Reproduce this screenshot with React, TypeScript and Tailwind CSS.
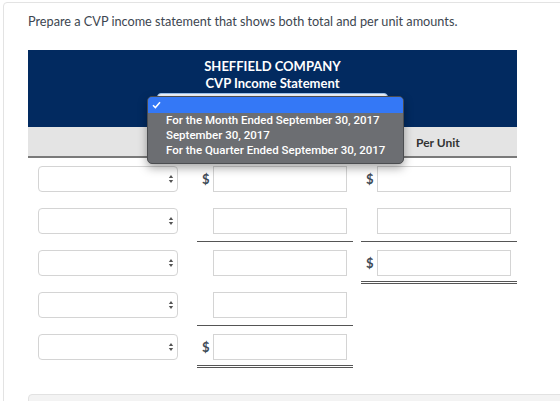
import React from 'react';

const lato = { fontFamily: 'Lato, "Open Sans", sans-serif' };

function Arrows() {
  return (
    <svg width="6" height="10" viewBox="0 0 6 10" className="text-[#555]" aria-hidden>
      <path d="M3 1 L5.2 4 H0.8 Z" fill="currentColor" />
      <path d="M3 9 L5.2 6 H0.8 Z" fill="currentColor" />
    </svg>
  );
}

function SelectBox() {
  return (
    <div className="ml-[10px] flex h-[26px] w-[140px] items-center justify-end rounded-[4px] border border-[#d4d4d4] bg-white pr-[3px]">
      <Arrows />
    </div>
  );
}

type Cell = { dollar?: boolean; line?: 'single' | 'double' } | null;

function Amount({ cell }: { cell: Cell }) {
  if (!cell) return <div className="h-[42px]" />;
  const border =
    cell.line === 'single'
      ? 'border-b border-[#555]'
      : cell.line === 'double'
        ? 'border-b-[3px] border-double border-[#555]'
        : '';
  return (
    <div className={`flex h-[42px] items-start pt-2 ${border}`}>
      <span className="w-4 pl-[5px] pt-[5px] text-[13px] font-bold leading-4 text-[#3f4b58]">
        {cell.dollar ? '$' : ''}
      </span>
      <div className="h-[26px] w-[134px] border border-[#d4d4d4] bg-white" />
    </div>
  );
}

const rows: { total: Cell; unit: Cell }[] = [
  { total: { dollar: true }, unit: { dollar: true } },
  { total: { line: 'single' }, unit: { line: 'single' } },
  { total: {}, unit: { dollar: true, line: 'double' } },
  { total: { line: 'single' }, unit: null },
  { total: { dollar: true, line: 'double' }, unit: null },
];

const options = [
  'For the Month Ended September 30, 2017',
  'September 30, 2017',
  'For the Quarter Ended September 30, 2017',
];

export default function App() {
  return (
    <div className="h-[401px] w-[560px] overflow-hidden bg-white" style={lato}>
      <div className="ml-[3px] mt-[2px] h-[420px] w-[600px] rounded-[4px] border border-[#e3e3e3] pl-[24px] pt-[9px]">
        <p className="text-[12.7px] leading-[18px] text-[#3d4650]">
          Prepare a CVP income statement that shows both total and per unit amounts.
        </p>

        <div className="mt-[20px] w-[489px]">
          {/* header */}
          <div className="relative bg-[#022a60] pt-[8px] text-center text-[13px] font-bold leading-[17px] text-white">
            <div>SHEFFIELD COMPANY</div>
            <div>CVP Income Statement</div>
            <div className="mx-auto mt-[1px] h-[22px] w-[231px] rounded-[4px] border border-[#9cc3f0] bg-[#f4f7fb]" />
            <div className="h-[12px]" />

            <div
              className="absolute left-[119px] top-[46px] z-10 w-[257px] overflow-hidden rounded-[5px] border border-[#4b4d50] bg-[#6c6e72] pb-[5px] text-left shadow-[0_4px_10px_rgba(0,0,0,0.35)]"
              style={{ fontFamily: 'Roboto, "Liberation Sans", Arial, sans-serif' }}
            >
              <div className="flex h-[16px] items-center bg-[#3478f6] pl-[4px]">
                <svg width="9" height="8" viewBox="0 0 9 8" aria-hidden>
                  <path d="M1 4.2 L3.4 6.6 L8 1.2" fill="none" stroke="white" strokeWidth="1.5" />
                </svg>
              </div>
              {options.map((o) => (
                <div key={o} className="pl-[18px] text-[11.5px] font-medium leading-[15px] text-white">
                  {o}
                </div>
              ))}
            </div>
          </div>

          {/* column heads */}
          <div className="grid grid-cols-[169px_156px_8px_156px] border-b-2 border-[#7a7a7a] bg-[#e4e4e4]">
            <div className="h-[29px]" />
            <div />
            <div />
            <div className="pl-[55px] pt-[8px] text-[12px] font-bold leading-4 text-[#333]">Per Unit</div>
          </div>

          {/* body */}
          <div className="grid grid-cols-[169px_156px_8px_156px]">
            {rows.map((r, i) => (
              <React.Fragment key={i}>
                <div className="h-[42px] pt-2">
                  <SelectBox />
                </div>
                <Amount cell={r.total} />
                <div />
                <Amount cell={r.unit} />
              </React.Fragment>
            ))}
          </div>
        </div>

        <div className="mt-[26px] h-[30px] w-[560px] rounded-[4px] border border-[#e2e2e2] bg-[#f3f3f3]" />
      </div>
    </div>
  );
}
